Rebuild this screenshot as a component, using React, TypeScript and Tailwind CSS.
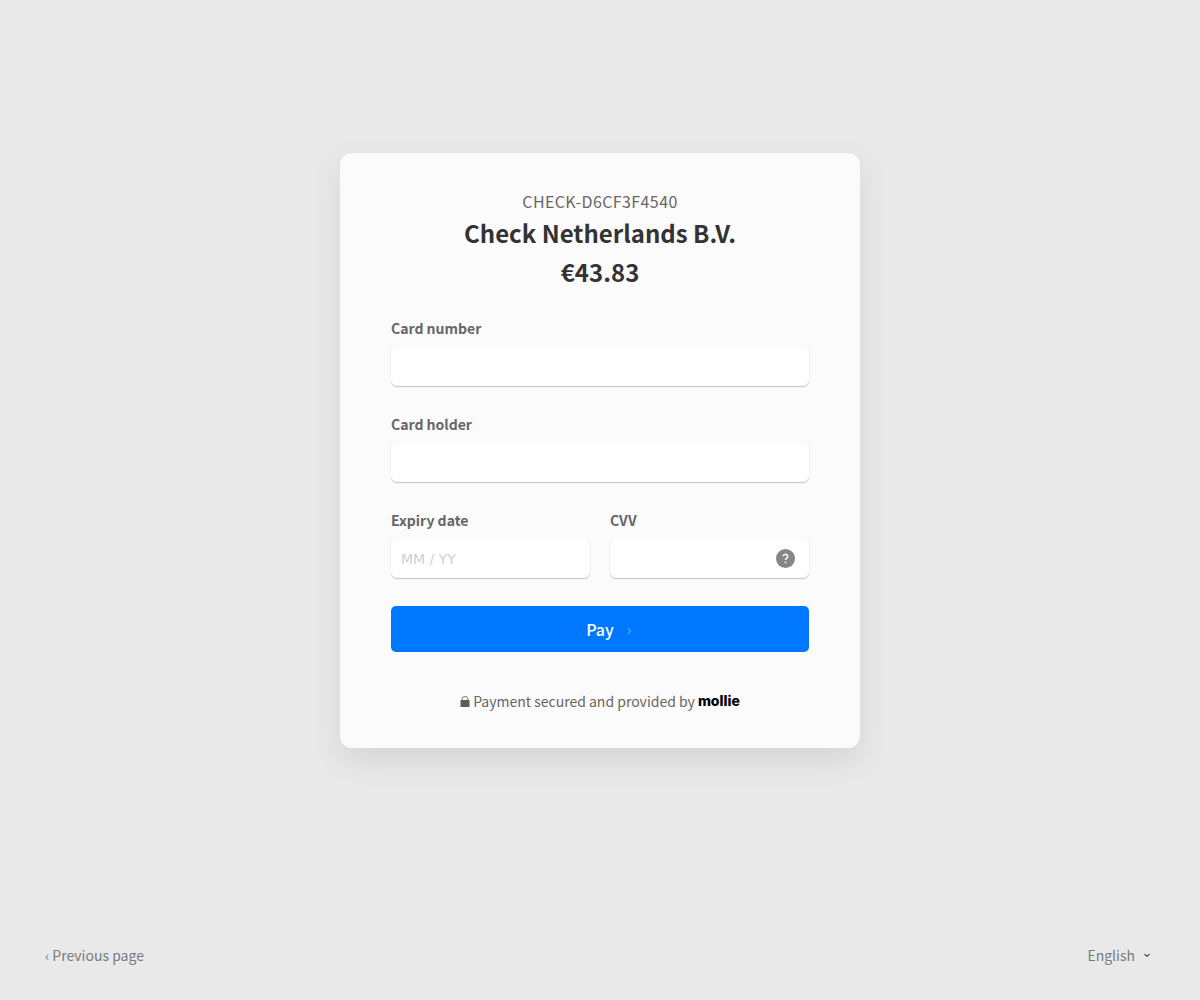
import React, { useState } from 'react';

interface FieldProps {
  id: string;
  label: string;
  placeholder?: string;
  autoComplete: string;
  children?: React.ReactNode;
}

const Field: React.FC<FieldProps> = ({ id, label, placeholder, autoComplete, children }) => {
  const [value, setValue] = useState('');

  return (
    <div className="flex min-w-0 flex-1 flex-col">
      <label htmlFor={id} className="text-sm leading-5 font-bold text-[#666]">
        {label}
      </label>
      <div className="relative mt-[9px]">
        <input
          id={id}
          type="text"
          value={value}
          placeholder={placeholder}
          autoComplete={autoComplete}
          onChange={(e) => setValue(e.target.value)}
          className="block h-[39px] w-full rounded-md bg-white px-[10px] font-['DejaVu_Sans',sans-serif] text-sm text-[#333] shadow-[0_1px_1px_rgba(0,0,0,0.2),0_0_1px_rgba(0,0,0,0.12)] outline-none placeholder:text-[#cfcfcf] focus:ring-2 focus:ring-[#0077ff]"
        />
        {children}
      </div>
    </div>
  );
};

const LockIcon = () => (
  <svg width="10" height="11" viewBox="0 0 10 11" aria-hidden="true">
    <path d="M2 5V3.2a3 2.7 0 0 1 6 0V5" fill="none" stroke="#777" strokeWidth="1" />
    <rect x="0.5" y="4" width="9" height="7" rx="0.6" fill="#5c5c5c" />
  </svg>
);

const HelpIcon = () => (
  <svg width="19" height="19" viewBox="0 0 19 19" aria-hidden="true">
    <circle cx="9.5" cy="9.5" r="9.5" fill="#868686" />
    <path
      d="M7.3 7.3a2.2 2 0 1 1 3.6 1.6c-.8.6-1.4.9-1.4 2.1"
      fill="none"
      stroke="#fff"
      strokeWidth="1.5"
    />
    <circle cx="9.5" cy="13.3" r="0.9" fill="#fff" />
  </svg>
);

const App: React.FC = () => {
  const [language, setLanguage] = useState('en');

  return (
    <div className="flex min-h-screen flex-col bg-[#e9e9e9] font-['Noto_Sans_CJK_SC',sans-serif] text-sm text-[#666]">
      {/* Card */}
      <main className="flex flex-1 items-center justify-center">
        <div className="w-full max-w-[520px] rounded-xl bg-[#fbfbfb] px-[51px] pt-9 pb-[37px] shadow-[0_12px_32px_rgba(0,0,0,0.09)]">
          <header className="text-center">
            <p className="text-base leading-6 tracking-wide">CHECK-D6CF3F4540</p>
            <h1 className="text-2xl leading-[39px] font-bold text-[#333]">Check Netherlands B.V.</h1>
            <p className="text-2xl leading-[39px] font-bold text-[#333]">€43.83</p>
          </header>

          <form className="mt-[27px] flex flex-col gap-7" onSubmit={(e) => e.preventDefault()}>
            <Field id="card-number" label="Card number" autoComplete="cc-number" />
            <Field id="card-holder" label="Card holder" autoComplete="cc-name" />
            <div className="flex gap-5">
              <Field id="expiry" label="Expiry date" placeholder="MM / YY" autoComplete="cc-exp" />
              <Field id="cvv" label="CVV" autoComplete="cc-csc">
                <button type="button" aria-label="Help" className="absolute top-[10px] right-[14px]">
                  <HelpIcon />
                </button>
              </Field>
            </div>
            <button
              type="submit"
              className="flex h-[46px] items-center justify-center gap-[13px] rounded-[5px] bg-[#0077ff] text-base font-medium text-white"
            >
              <span className="pl-[18px]">Pay</span>
              <svg className="mt-[3px]" width="5" height="8" viewBox="0 0 5 8" aria-hidden="true">
                <path d="M1 1l2.6 3L1 7" fill="none" stroke="#4aa8ff" strokeWidth="1.2" />
              </svg>
            </button>
          </form>

          <p className="mt-[39px] flex items-center justify-center gap-[3px] leading-5">
            <LockIcon />
            <span>Payment secured and provided by</span>
            <a href="#mollie" className="font-['Inter',sans-serif] text-sm leading-5 font-extrabold text-black">
              mollie
            </a>
          </p>
        </div>
      </main>

      {/* Footer */}
      <footer className="flex items-center justify-between px-[45px] pt-11 pb-[35px] leading-5 text-[#777b80]">
        <a href="#back">‹ Previous page</a>
        <div className="relative mr-1">
          <select
            aria-label="Language"
            value={language}
            onChange={(e) => setLanguage(e.target.value)}
            className="field-sizing-content cursor-pointer appearance-none bg-transparent pr-4 outline-none"
          >
            <option value="en">English</option>
          </select>
          <svg
            className="pointer-events-none absolute top-2 right-0"
            width="8"
            height="6"
            viewBox="0 0 8 6"
            aria-hidden="true"
          >
            <path d="M1.5 1.2L4 3.2l2.5-2" fill="none" stroke="#444" strokeWidth="1.2" />
          </svg>
        </div>
      </footer>
    </div>
  );
};

export default App;
